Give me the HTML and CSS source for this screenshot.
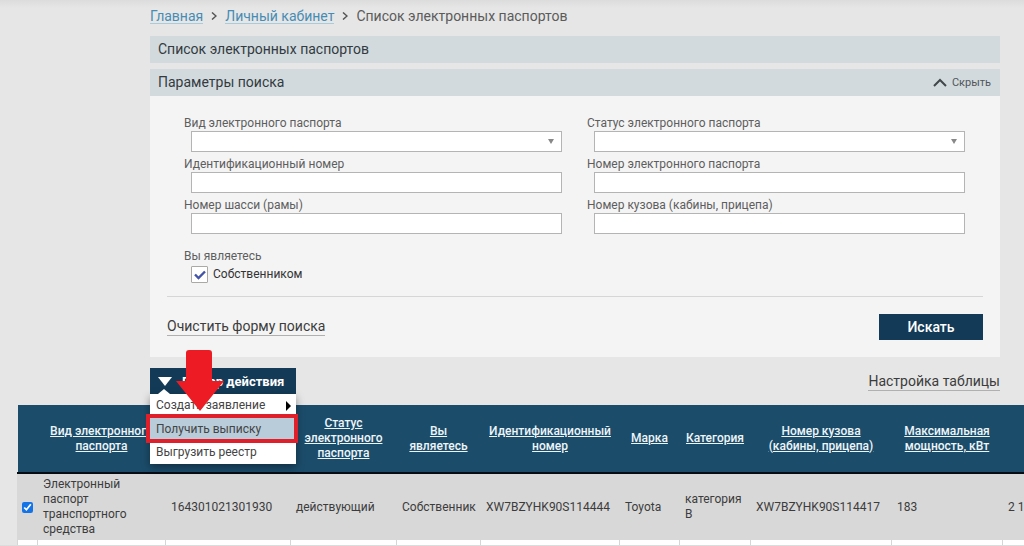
FILE: index.html
```html
<!DOCTYPE html>
<html lang="ru">
<head>
<meta charset="utf-8">
<title>Список электронных паспортов</title>
<link rel="stylesheet" href="styles.css">
</head>
<body>
<main class="content">
  <nav class="crumbs" aria-label="Навигация">
    <a href="#">Главная</a>
    <svg class="sep" viewBox="0 0 6 8" aria-hidden="true"><path d="M1 0.5 5 4 1 7.5"/></svg>
    <a href="#">Личный кабинет</a>
    <svg class="sep" viewBox="0 0 6 8" aria-hidden="true"><path d="M1 0.5 5 4 1 7.5"/></svg>
    <span>Список электронных паспортов</span>
  </nav>

  <h1 class="bar">Список электронных паспортов</h1>

  <section class="search">
    <header class="bar">
      <h2 class="bar-title">Параметры поиска</h2>
      <button class="collapse" type="button">
        <svg viewBox="0 0 14 9" aria-hidden="true"><path d="M1 8 7 2l6 6"/></svg>
        Скрыть
      </button>
    </header>
    <form class="form">
      <div class="fields">
        <div class="field"><label for="kind">Вид электронного паспорта</label><select id="kind"><option></option></select></div>
        <div class="field"><label for="status">Статус электронного паспорта</label><select id="status"><option></option></select></div>
        <div class="field"><label for="vin">Идентификационный номер</label><input id="vin" type="text"></div>
        <div class="field"><label for="number">Номер электронного паспорта</label><input id="number" type="text"></div>
        <div class="field"><label for="chassis">Номер шасси (рамы)</label><input id="chassis" type="text"></div>
        <div class="field"><label for="cab">Номер кузова (кабины, прицепа)</label><input id="cab" type="text"></div>
      </div>
      <fieldset class="role">
        <legend>Вы являетесь</legend>
        <label class="role-option"><input type="checkbox" checked>Собственником</label>
      </fieldset>
      <div class="form-actions">
        <a class="text-link" href="#">Очистить форму поиска</a>
        <button class="submit" type="button">Искать</button>
      </div>
    </form>
  </section>

  <div class="toolbar">
    <div class="actions">
      <button class="actions-toggle" type="button">
        <svg viewBox="0 0 14 9" aria-hidden="true"><path d="M0 0h14L7 9z"/></svg>
        Выбор действия
      </button>
      <ul class="menu">
        <li><a href="#">Создать заявление<svg class="sub" viewBox="0 0 5 10" aria-hidden="true"><path d="M0 0 5 5 0 10z"/></svg></a></li>
        <li><a class="current" href="#">Получить выписку</a></li>
        <li><a href="#">Выгрузить реестр</a></li>
      </ul>
      <div class="highlight"></div>
      <svg class="arrow" viewBox="0 0 48 64" aria-hidden="true"><path d="M13 1h20q3 0 3 3v28h12L24 62 0 32h10V4q0-3 3-3z"/></svg>
    </div>
    <a class="text-link" href="#">Настройка таблицы</a>
  </div>
</main>

<div class="table-wrap">
  <table class="grid">
    <colgroup>
      <col class="c-check"><col class="c-kind"><col class="c-number"><col class="c-status"><col class="c-role"><col class="c-vin"><col class="c-brand"><col class="c-cat"><col class="c-cab"><col class="c-power"><col class="c-mass">
    </colgroup>
    <thead>
      <tr>
        <th></th>
        <th><a href="#">Вид электронного паспорта</a></th>
        <th><a href="#">Номер</a></th>
        <th><a href="#">Статус электронного паспорта</a></th>
        <th><a href="#">Вы являетесь</a></th>
        <th><a href="#">Идентификационный номер</a></th>
        <th><a href="#">Марка</a></th>
        <th><a href="#">Категория</a></th>
        <th class="narrow"><a href="#">Номер кузова (кабины, прицепа)</a></th>
        <th><a href="#">Максимальная мощность, кВт</a></th>
        <th></th>
      </tr>
    </thead>
    <tbody>
      <tr class="selected">
        <td class="check"><input type="checkbox" checked aria-label="Выбрать паспорт 164301021301930"></td>
        <td>Электронный паспорт транспортного средства</td>
        <td>164301021301930</td>
        <td>действующий</td>
        <td>Собственник</td>
        <td>XW7BZYHK90S114444</td>
        <td>Toyota</td>
        <td>категория B</td>
        <td>XW7BZYHK90S114417</td>
        <td>183</td>
        <td>2 160</td>
      </tr>
      <tr class="next"><td></td><td></td><td></td><td></td><td></td><td></td><td></td><td></td><td></td><td></td><td></td></tr>
    </tbody>
  </table>
</div>
</body>
</html>
```
FILE: styles.css
```css
* { box-sizing: border-box; }

body {
  margin: 0;
  overflow: hidden;
  background: linear-gradient(#dcdcdc, #e6e6e6 8px) #e6e6e6;
  color: #3c3c3c;
  font: 12px/15px Roboto, "Noto Sans", sans-serif;
}

a { color: inherit; text-decoration: none; }
button, input, select { font: inherit; color: inherit; }

.content { margin: 0 24px 0 150px; }

.crumbs {
  display: flex;
  align-items: center;
  gap: 8px;
  height: 36px;
  padding-bottom: 4px;
  color: #5b5b5b;
  font-size: 14px;
  line-height: 14px;
}
.crumbs a { color: #468cb4; border-bottom: 1px solid #a9cbdc; }
.sep { width: 6px; height: 8px; fill: none; stroke: #555; stroke-width: 1.5; }

.bar {
  display: flex;
  align-items: center;
  justify-content: space-between;
  height: 27px;
  margin: 0 0 6px;
  padding: 0 9px 0 8px;
  background: #d2dade;
  color: #333a40;
  font-size: 14px;
  font-weight: 400;
}
.bar-title { margin: 0; font: inherit; }

.collapse {
  display: flex;
  align-items: center;
  gap: 5px;
  padding: 0;
  border: 0;
  background: none;
  color: #50565a;
  font-size: 11px;
}
.collapse svg { width: 14px; height: 9px; fill: none; stroke: #40464a; stroke-width: 2; }

.search { background: #f4f4f4; }
.search .bar { margin: 0; }
.form { padding: 19px 17px 17px; }

.fields {
  display: grid;
  grid-template-columns: 1fr 1fr;
  gap: 4px 25px;
  padding: 0 18px 0 17px;
}
.field { display: flex; flex-direction: column; color: #5e5e5e; }
.field label { line-height: 16px; }
.field input, .field select {
  height: 21px;
  margin-left: 7px;
  padding: 0 6px;
  border: 1px solid #b4b4b4;
  border-radius: 0;
  background: #fff;
}
.field select {
  appearance: none;
  background: #fff url("data:image/svg+xml,%3Csvg xmlns='http://www.w3.org/2000/svg' width='6' height='5'%3E%3Cpath d='M0 0h6L3 5z' fill='%23888'/%3E%3C/svg%3E") no-repeat right 7px center;
}

.role { margin: 0 17px; padding: 0; border: 0; }
.role legend { padding: 15px 0 0; color: #5e5e5e; }
.role-option {
  display: flex;
  align-items: center;
  gap: 5px;
  margin: 2px 0 0 7px;
  color: #333;
}
.role-option input {
  appearance: none;
  width: 17px;
  height: 17px;
  margin: 0;
  border: 1px solid #aaa9a4;
  border-radius: 1px;
  background: #fff url("data:image/svg+xml,%3Csvg xmlns='http://www.w3.org/2000/svg' width='12' height='10'%3E%3Cpath d='M1 4.5 4.5 8 11 1.5' fill='none' stroke='%234253a8' stroke-width='2.4'/%3E%3C/svg%3E") no-repeat center;
}

.form-actions {
  display: flex;
  align-items: center;
  justify-content: space-between;
  margin-top: 13px;
  padding-top: 17px;
  border-top: 1px solid #d6d6d6;
}
.text-link { border-bottom: 1px solid #b0b0b0; font-size: 14px; line-height: 17px; }
.submit {
  width: 104px;
  height: 26px;
  padding: 0;
  border: 0;
  background: #133b57;
  color: #fff;
  font-size: 14px;
  font-weight: 500;
}

.toolbar {
  display: flex;
  align-items: flex-start;
  justify-content: space-between;
  height: 48px;
  padding-top: 11px;
}
.toolbar > .text-link { margin-top: 5px; }

.actions { position: relative; width: 146px; }
.actions-toggle {
  display: flex;
  align-items: center;
  gap: 10px;
  width: 100%;
  height: 26px;
  padding: 0 8px;
  border: 0;
  background: #133b57;
  color: #fff;
  font-size: 13px;
  font-weight: 700;
  white-space: nowrap;
}
.actions-toggle svg { flex: none; width: 14px; height: 9px; fill: #fff; }
.menu {
  position: absolute;
  z-index: 1;
  top: 26px;
  left: 0;
  width: 100%;
  margin: 0;
  padding: 0;
  background: #fff;
  box-shadow: 0 3px 8px #0006;
  list-style: none;
}
.menu::before {
  content: "";
  position: absolute;
  top: -5px;
  left: 8px;
  border: 6px solid transparent;
  border-top: 0;
  border-bottom: 5px solid #fff;
}
.menu a {
  display: flex;
  align-items: center;
  justify-content: space-between;
  height: 23px;
  padding: 0 5px 0 6px;
  color: #444;
}
.menu .current { height: 24px; background: #b8ccd9; }
.sub { width: 5px; height: 10px; fill: #000; }
.highlight {
  position: absolute;
  z-index: 2;
  top: 46px;
  left: -4px;
  width: 152px;
  height: 29px;
  border: 4px solid #df202b;
}
.arrow {
  position: absolute;
  z-index: 3;
  top: -19px;
  left: 26px;
  width: 48px;
  height: 64px;
  fill: #ed1c24;
}

.table-wrap { margin-left: 17px; overflow: hidden; }
.grid { width: 1106px; border-collapse: collapse; table-layout: fixed; }
.c-check { width: 20px; }
.c-kind { width: 128px; }
.c-number { width: 125px; }
.c-status { width: 106px; }
.c-role { width: 84px; }
.c-vin { width: 139px; }
.c-brand { width: 60px; }
.c-cat { width: 71px; }
.c-cab { width: 141px; }
.c-power { width: 111px; }
.grid th {
  height: 68px;
  padding: 0 4px;
  border-bottom: 2px solid #050b12;
  background: #1b4c6a;
  color: #eef5f9;
  font-weight: 500;
}
.grid .narrow { padding: 0 12px; }
.grid th a { text-decoration: underline; }
.grid td {
  height: 67px;
  padding: 0 0 0 5px;
  border-left: 1px solid #d6d6d6;
  background: #fff;
}
.grid .selected td { border-left-color: #d8d8d8; background: #d8d8d8; }
.grid .next td { height: 5px; }
.grid .check { padding: 0; text-align: center; }
.check input { display: block; width: 11px; height: 11px; margin: 0 auto; accent-color: #1473e6; }
```
